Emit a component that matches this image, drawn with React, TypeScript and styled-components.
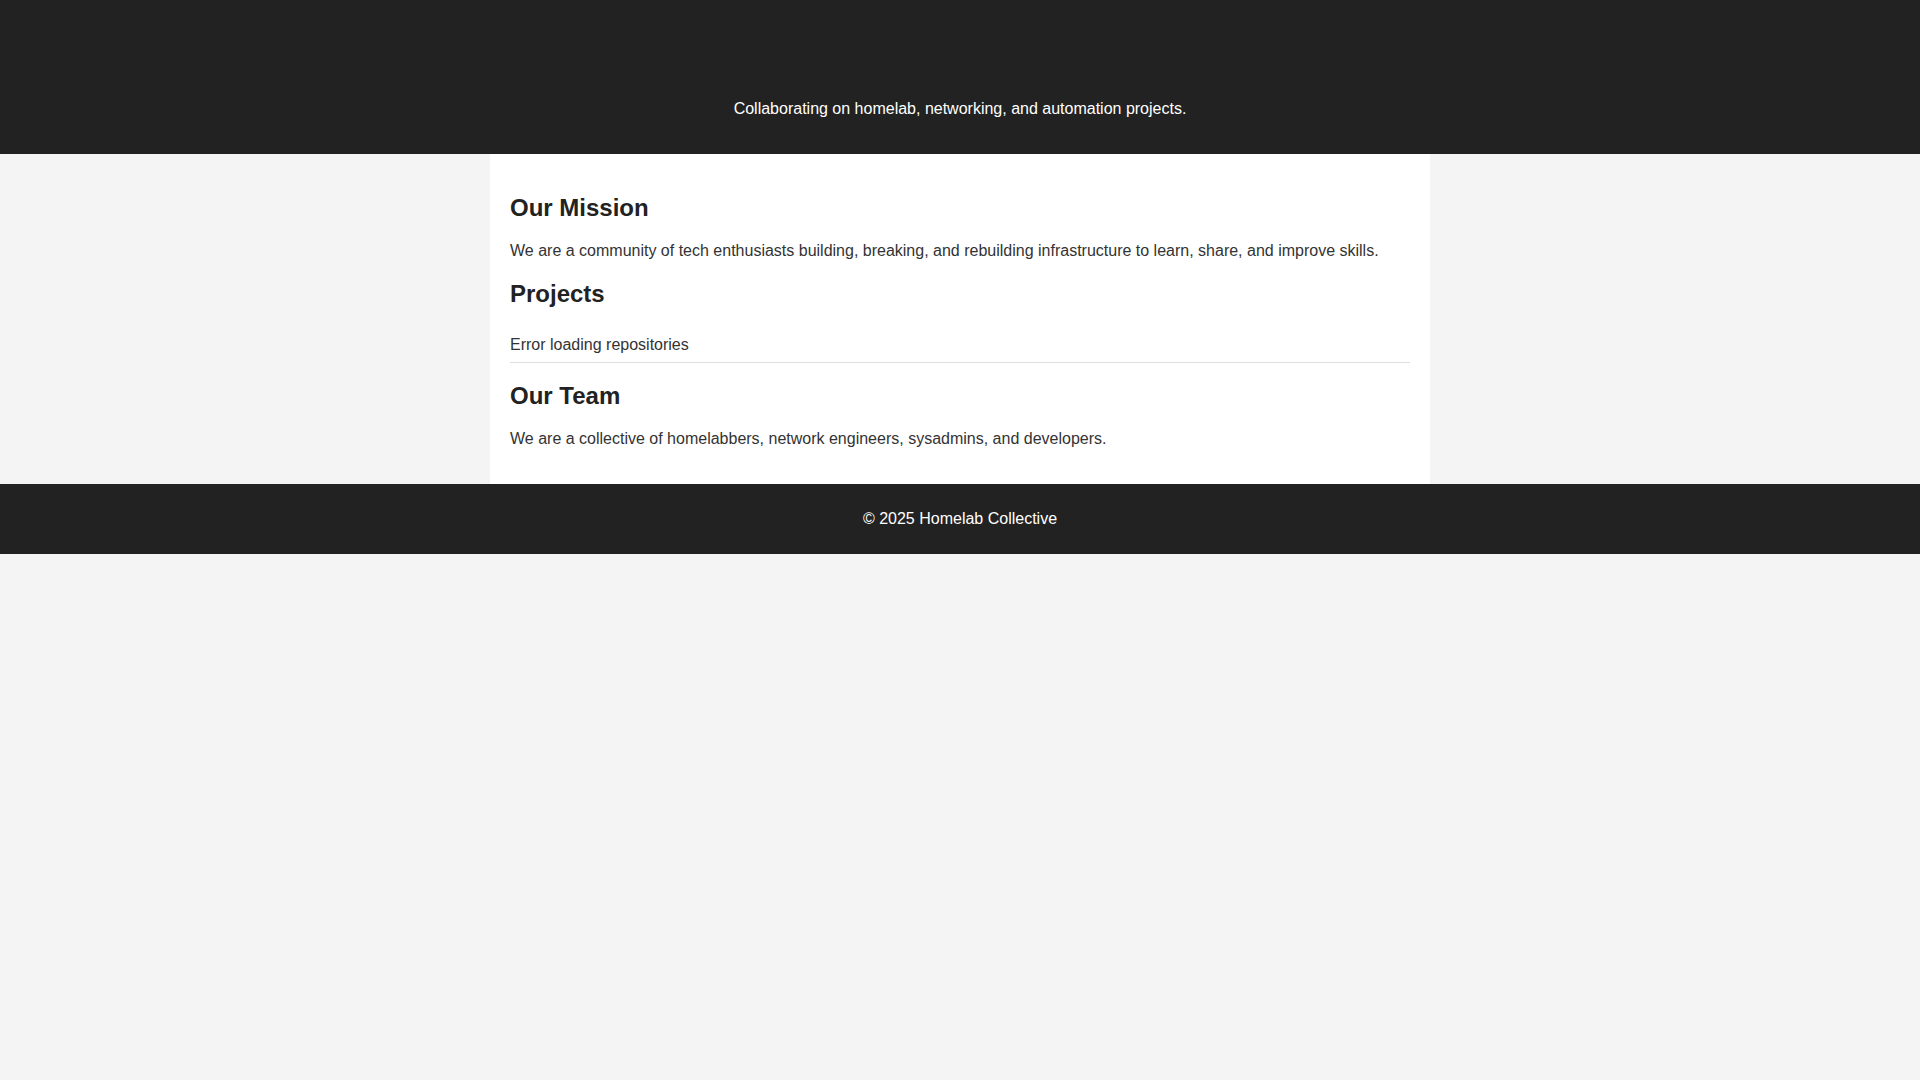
import React from "react";
import styled, { createGlobalStyle } from "styled-components";

const GlobalStyle = createGlobalStyle`
  body {
    margin: 0;
    background: #f4f4f4;
    color: #333;
    font-family: "Liberation Sans", Arial, sans-serif;
    line-height: normal;
  }
`;

const Header = styled.header`
  background: #222;
  color: #fff;
  text-align: center;
  padding: 20px;
`;

// the logo area stays empty in the original (image failed to load)
const Brand = styled.div`
  height: 37px;
  margin: 21.44px 0;
`;

const Tagline = styled.p`
  margin: 0 0 16px;
  font-size: 16px;
`;

const Main = styled.main`
  max-width: 900px;
  margin: 0 auto;
  padding: 20px;
  background: #fff;
`;

const SectionTitle = styled.h2`
  font-size: 24px;
  font-weight: bold;
  color: #222;
  margin: 19.92px 0;
`;

const Text = styled.p`
  margin: 16px 0;
  font-size: 16px;
`;

const RepoItem = styled.div`
  padding: 8px 0;
  border-bottom: 1px solid #ddd;
  font-size: 16px;
`;

const Footer = styled.footer`
  background: #222;
  color: #fff;
  text-align: center;
  padding: 10px;

  p {
    margin: 16px 0;
  }
`;

const App = () => {
  return (
    <>
      <GlobalStyle />
      <Header>
        <Brand />
        <Tagline>Collaborating on homelab, networking, and automation projects.</Tagline>
      </Header>
      <Main>
        <section>
          <SectionTitle>Our Mission</SectionTitle>
          <Text>
            We are a community of tech enthusiasts building, breaking, and rebuilding
            infrastructure to learn, share, and improve skills.
          </Text>
        </section>
        <section>
          <SectionTitle>Projects</SectionTitle>
          <RepoItem>Error loading repositories</RepoItem>
        </section>
        <section>
          <SectionTitle>Our Team</SectionTitle>
          <Text>
            We are a collective of homelabbers, network engineers, sysadmins, and developers.
          </Text>
        </section>
      </Main>
      <Footer>
        <p>© 2025 Homelab Collective</p>
      </Footer>
    </>
  );
};

export default App;
